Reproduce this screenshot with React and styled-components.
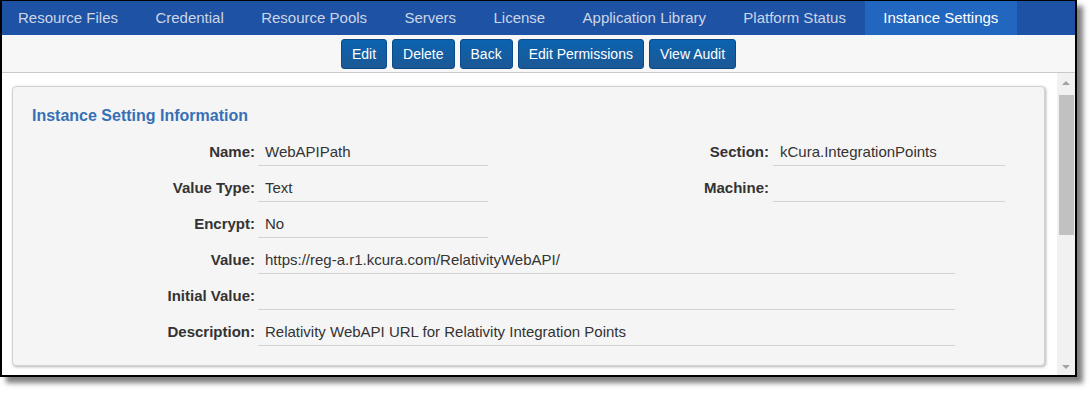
import React from 'react';
import styled, { createGlobalStyle } from 'styled-components';

const Global = createGlobalStyle`
  html, body { margin: 0; padding: 0; background: #fff; }
  body { font-family: "Liberation Sans", Arial, sans-serif; }
  #root { width: 1092px; height: 393px; }
`;

const Frame = styled.div`
  box-sizing: border-box;
  width: 1077px;
  height: 377px;
  border: 2px solid #000;
  border-top-width: 1px;
  box-shadow: 6px 6px 5px rgba(0, 0, 0, 0.5);
  display: flex;
  flex-direction: column;
  overflow: hidden;
  background: #fff;
`;

const Nav = styled.nav`
  height: 34px;
  flex-shrink: 0;
  display: flex;
  background: #1e52a5;
`;

const Tab = styled.div`
  padding: 0 18.7px;
  line-height: 34px;
  font-size: 15px;
  white-space: nowrap;
  color: ${(p) => (p.$active ? '#ffffff' : '#cdd6e7')};
  background: ${(p) => (p.$active ? '#2166bf' : 'transparent')};
  &:first-child { padding-left: 16px; }
`;

const Toolbar = styled.div`
  height: 37px;
  flex-shrink: 0;
  box-sizing: content-box;
  border-bottom: 1px solid #c9c9c9;
  background: #f7f7f7;
  display: flex;
  justify-content: center;
  align-items: flex-start;
  gap: 5px;
  & > * { margin-top: 4px; }
`;

const Button = styled.button`
  height: 30px;
  padding: 0 10px;
  border: 1px solid #0b4a88;
  border-radius: 3px;
  background: linear-gradient(#0b63b0, #1c5895);
  color: #fff;
  font-family: "Liberation Sans", Arial, sans-serif;
  font-size: 14px;
  cursor: pointer;
`;

const Content = styled.div`
  flex: 1;
  display: flex;
  min-height: 0;
`;

const Main = styled.div`
  flex: 1;
  background: #fff;
  padding: 13px 12px 0 10px;
`;

const Card = styled.section`
  box-sizing: border-box;
  height: 280px;
  background: #f5f5f5;
  border: 1px solid #d2d2d2;
  border-radius: 4px;
  box-shadow: 1px 1px 3px rgba(0, 0, 0, 0.3);
  padding: 19px 0 0 0;
`;

const Heading = styled.h2`
  margin: 0 0 4px 19px;
  font-size: 16px;
  line-height: 20px;
  font-weight: bold;
  color: #3570b7;
`;

const Row = styled.div`
  display: flex;
`;

const Label = styled.div`
  box-sizing: border-box;
  width: ${(p) => p.$w}px;
  padding: 12px ${(p) => p.$pr || 3}px 4px 0;
  line-height: 20px;
  font-size: 15px;
  font-weight: bold;
  color: #333;
  text-align: right;
  white-space: nowrap;
`;

const Value = styled.div`
  box-sizing: border-box;
  width: ${(p) => p.$w}px;
  height: 36px;
  padding: 12px 7px 3px 7px;
  line-height: 20px;
  font-size: 15px;
  color: #333;
  border-bottom: 1px solid #d3d3d3;
  white-space: nowrap;
`;

const Scrollbar = styled.div`
  width: 18px;
  flex-shrink: 0;
  background: #f1f1f1;
  display: flex;
  flex-direction: column;
`;

const ArrowBtn = styled.div`
  height: ${(p) => p.$h}px;
  display: flex;
  align-items: center;
  justify-content: center;
  margin-top: ${(p) => (p.$bottom ? 'auto' : '0')};
  &::before {
    content: '';
    width: 0;
    height: 0;
    border-left: 4px solid transparent;
    border-right: 4px solid transparent;
    ${(p) =>
      p.$bottom
        ? 'border-top: 4px solid #a3a3a3;'
        : 'border-bottom: 4px solid #a3a3a3;'}
  }
`;

const Thumb = styled.div`
  height: 140px;
  margin: 2px 1px 0 2px;
  background: #c1c1c1;
`;

const tabs = [
  'Resource Files',
  'Credential',
  'Resource Pools',
  'Servers',
  'License',
  'Application Library',
  'Platform Status',
  'Instance Settings',
];

const buttons = ['Edit', 'Delete', 'Back', 'Edit Permissions', 'View Audit'];

export default function App() {
  return (
    <>
      <Global />
      <Frame>
        <Nav>
          {tabs.map((t) => (
            <Tab key={t} $active={t === 'Instance Settings'}>
              {t}
            </Tab>
          ))}
        </Nav>
        <Toolbar>
          {buttons.map((b) => (
            <Button key={b}>{b}</Button>
          ))}
        </Toolbar>
        <Content>
          <Main>
            <Card>
              <Heading>Instance Setting Information</Heading>
              <Row>
                <Label $w={245}>Name:</Label>
                <Value $w={230}>WebAPIPath</Value>
                <Label $w={285} $pr={4}>Section:</Label>
                <Value $w={232}>kCura.IntegrationPoints</Value>
              </Row>
              <Row>
                <Label $w={245}>Value Type:</Label>
                <Value $w={230}>Text</Value>
                <Label $w={285} $pr={4}>Machine:</Label>
                <Value $w={232}></Value>
              </Row>
              <Row>
                <Label $w={245}>Encrypt:</Label>
                <Value $w={230}>No</Value>
              </Row>
              <Row>
                <Label $w={245}>Value:</Label>
                <Value $w={697}>https://reg-a.r1.kcura.com/RelativityWebAPI/</Value>
              </Row>
              <Row>
                <Label $w={245}>Initial Value:</Label>
                <Value $w={697}></Value>
              </Row>
              <Row>
                <Label $w={245}>Description:</Label>
                <Value $w={697}>Relativity WebAPI URL for Relativity Integration Points</Value>
              </Row>
            </Card>
          </Main>
          <Scrollbar>
            <ArrowBtn $h={20} />
            <Thumb />
            <ArrowBtn $h={17} $bottom />
          </Scrollbar>
        </Content>
      </Frame>
    </>
  );
}
